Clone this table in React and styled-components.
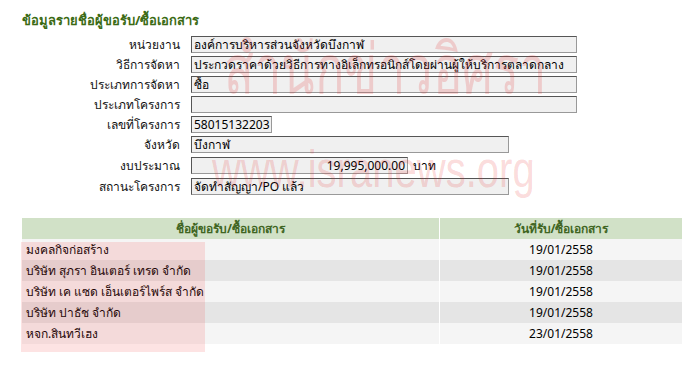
import React from "react";
import styled, { createGlobalStyle } from "styled-components";

const Global = createGlobalStyle`
  html, body { margin: 0; padding: 0; background: #ffffff; }
  body { font-family: Tahoma, "Noto Sans", "DejaVu Sans", sans-serif; font-size: 12px; color: #000; }
`;

const Page = styled.div`
  position: relative;
  width: 700px;
  height: 366px;
  padding: 12px 15px 0 22px;
  box-sizing: border-box;
  overflow: hidden;
`;

const Title = styled.h2`
  margin: 0 0 7px 0;
  font-size: 13px;
  font-weight: bold;
  color: #3b6b14;
  line-height: 17px;
`;

const Form = styled.div`
  display: grid;
  grid-template-columns: 158px auto;
  column-gap: 11px;
  row-gap: 3px;
  align-items: center;
`;

const Label = styled.div`
  text-align: right;
  font-size: 12px;
  line-height: 17px;
  color: #111;
`;

const FieldWrap = styled.div`
  display: flex;
  align-items: center;
  gap: 5px;
`;

const Field = styled.div`
  width: ${(p) => p.$w}px;
  height: 17px;
  box-sizing: border-box;
  background: #f0f0f0;
  border-top: 1px solid #555;
  border-left: 1px solid #555;
  border-right: 1px solid #999;
  border-bottom: 1px solid #999;
  padding: 0 2px;
  font-size: 12px;
  line-height: 15px;
  text-align: ${(p) => (p.$right ? "right" : "left")};
  white-space: nowrap;
  overflow: hidden;
`;

const Unit = styled.span`
  font-size: 12px;
`;

const Table = styled.table`
  margin-top: 23px;
  width: 662px;
  border-collapse: separate;
  border-spacing: 1px 0;
  margin-left: -1px;
`;

const Th = styled.th`
  background: #d1e1c7;
  color: #3f6522;
  font-weight: bold;
  font-size: 12px;
  height: 21px;
  padding: 0;
  text-align: center;
  width: ${(p) => p.$w || "auto"};
`;

const Tr = styled.tr`
  background: ${(p) => (p.$alt ? "#e5e5e5" : "#f5f5f5")};
`;

const Td = styled.td`
  height: 21px;
  padding: 0 4px;
  font-size: 12px;
  text-align: ${(p) => (p.$center ? "center" : "left")};
  background: inherit;
`;

const Highlight = styled.div`
  position: absolute;
  left: 21px;
  top: 242px;
  width: 184px;
  height: 110px;
  background: rgba(240, 60, 60, 0.14);
  pointer-events: none;
`;

const Watermark = styled.div`
  position: absolute;
  left: ${(p) => p.$x}px;
  top: ${(p) => p.$y}px;
  font-family: "Liberation Sans", Arial, sans-serif;
  font-size: ${(p) => p.$size}px;
  line-height: 1;
  color: rgba(230, 40, 40, 0.18);
  white-space: nowrap;
  pointer-events: none;
  transform: scaleX(${(p) => p.$sx});
  transform-origin: left top;
`;

const fields = [
  { label: "หน่วยงาน", value: "องค์การบริหารส่วนจังหวัดบึงกาฬ", w: 386 },
  { label: "วิธีการจัดหา", value: "ประกวดราคาด้วยวิธีการทางอิเล็กทรอนิกส์โดยผ่านผู้ให้บริการตลาดกลาง", w: 386 },
  { label: "ประเภทการจัดหา", value: "ซื้อ", w: 386 },
  { label: "ประเภทโครงการ", value: "", w: 386 },
  { label: "เลขที่โครงการ", value: "58015132203", w: 81 },
  { label: "จังหวัด", value: "บึงกาฬ", w: 318 },
  { label: "งบประมาณ", value: "19,995,000.00", w: 217, right: true, unit: "บาท" },
  { label: "สถานะโครงการ", value: "จัดทำสัญญา/PO แล้ว", w: 318 },
];

const rows = [
  ["มงคลกิจก่อสร้าง", "19/01/2558"],
  ["บริษัท สุภรา อินเตอร์ เทรด จำกัด", "19/01/2558"],
  ["บริษัท เค แซด เอ็นเตอร์ไพร์ส จำกัด", "19/01/2558"],
  ["บริษัท ปาธัช จำกัด", "19/01/2558"],
  ["หจก.สินทวีเฮง", "23/01/2558"],
];

export default function App() {
  return (
    <>
      <Global />
      <Page>
        <Title>ข้อมูลรายชื่อผู้ขอรับ/ซื้อเอกสาร</Title>
        <Form>
          {fields.map((f) => (
            <React.Fragment key={f.label}>
              <Label>{f.label}</Label>
              <FieldWrap>
                <Field $w={f.w} $right={f.right}>{f.value}</Field>
                {f.unit && <Unit>{f.unit}</Unit>}
              </FieldWrap>
            </React.Fragment>
          ))}
        </Form>
        <Table>
          <thead>
            <tr>
              <Th $w="417px">ชื่อผู้ขอรับ/ซื้อเอกสาร</Th>
              <Th>วันที่รับ/ซื้อเอกสาร</Th>
            </tr>
          </thead>
          <tbody>
            {rows.map((r, i) => (
              <Tr key={i} $alt={i % 2 === 1}>
                <Td>{r[0]}</Td>
                <Td $center>{r[1]}</Td>
              </Tr>
            ))}
          </tbody>
        </Table>
        <Watermark $x={224} $y={35} $size={70} $sx={0.7}>สำนักข่าวอิศรา</Watermark>
        <Watermark $x={212} $y={143} $size={52} $sx={0.77}>www.isranews.org</Watermark>
        <Highlight />
      </Page>
    </>
  );
}
